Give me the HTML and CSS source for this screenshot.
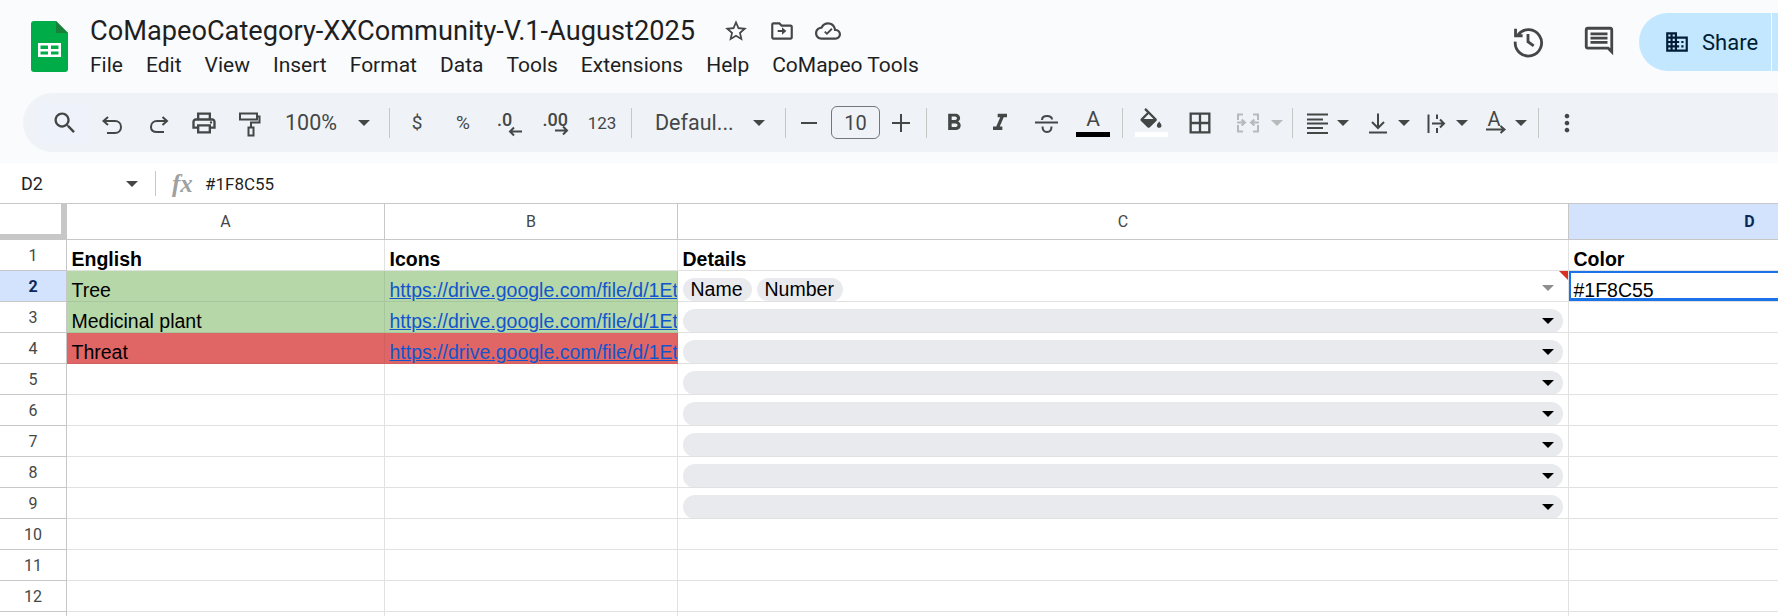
FILE: index.html

```html
<!DOCTYPE html>
<html lang="en">
<head>
  <meta charset="UTF-8" />
  <title>CoMapeoCategory-XXCommunity-V.1-August2025</title>
  <meta name="viewport" content="width=device-width, initial-scale=1" />
  <link rel="stylesheet" href="styles.css">
</head>
<body>
  <header class="top">
    <svg class="logo" viewBox="0 0 37 51">
      <path d="M3 0H25L37 12V48a3 3 0 0 1-3 3H3a3 3 0 0 1-3-3V3a3 3 0 0 1 3-3z" fill="#00ac47"/>
      <path d="M25 0L37 12H25z" fill="#188038"/>
      <path d="M7 22H30V36H7zM9.500 24.500V28H17V24.500zM20 24.500V28H27.500V24.500zM9.500 30.500V33.500H17V30.500zM20 30.500V33.500H27.500V30.500z" fill="#fff" fill-rule="evenodd"/>
    </svg>
    <div class="doc">
      <div class="title-row">
        <span class="title">CoMapeoCategory-XXCommunity-V.1-August2025</span>
        <svg class="title-ico star" viewBox="0 0 24 24"><path d="M22 9.240l-7.190-.62L12 2 9.190 8.630 2 9.240l5.460 4.730L5.820 21 12 17.270 18.180 21l-1.630-7.030L22 9.240zM12 15.400l-3.760 2.270 1-4.280-3.320-2.880 4.380-.38L12 6.100l1.710 4.040 4.380.38-3.320 2.880 1 4.280L12 15.400z"/></svg>
        <svg class="title-ico" viewBox="0 0 24 24"><path d="M20 6h-8l-2-2H4c-1.110 0-1.990.89-1.990 2L2 18c0 1.110.89 2 2 2h16c1.110 0 2-.89 2-2V8c0-1.110-.89-2-2-2zm0 12H4V6h5.170l2 2H20v10zm-8-5H8v-2h4V8.500l4 3.500-4 3.500V13z"/></svg>
        <svg class="title-ico" viewBox="0 0 24 24"><path d="M19.350 10.040C18.670 6.590 15.640 4 12 4 9.110 4 6.600 5.640 5.350 8.040 2.340 8.360 0 10.910 0 14c0 3.310 2.690 6 6 6h13c2.760 0 5-2.240 5-5 0-2.640-2.050-4.780-4.650-4.960zM19 18H6c-2.210 0-4-1.790-4-4 0-2.050 1.530-3.760 3.560-3.970l1.070-.11.5-.95C8.080 7.140 9.940 6 12 6c2.620 0 4.880 1.860 5.390 4.430l.3 1.500 1.530.11c1.560.1 2.780 1.410 2.780 2.960 0 1.650-1.350 3-3 3zm-8-2.300l-2.600-2.600 1.200-1.200 1.400 1.400 4-4 1.200 1.200z"/></svg>
      </div>
      <nav class="menu">
        <span>File</span><span>Edit</span><span>View</span><span>Insert</span><span>Format</span><span>Data</span><span>Tools</span><span>Extensions</span><span>Help</span><span>CoMapeo Tools</span>
      </nav>
    </div>
    <div class="actions">
      <svg class="act-ico" viewBox="0 0 24 24"><path class="line" d="M5 7.500A9.300 9.300 0 1 1 3 12.500M3.200 3.300V8.300H8.200M12 7V12.500L16 15.500"/></svg>
      <svg class="act-ico last" viewBox="0 0 24 24"><path d="M21.990 4c0-1.100-.89-2-1.990-2H4c-1.100 0-2 .9-2 2v12c0 1.100.9 2 2 2h14l4 4-.01-18zM20 4v13.170L18.830 16H4V4h16zM6 12h12v2H6zm0-3h12v2H6zm0-3h12v2H6z"/></svg>
      <div class="share">
        <div class="share-main">
          <svg class="share-ico" viewBox="0 0 24 24"><path d="M12 7V3H2v18h20V7H12zM6 19H4v-2h2v2zm0-4H4v-2h2v2zm0-4H4V9h2v2zm0-4H4V5h2v2zm4 12H8v-2h2v2zm0-4H8v-2h2v2zm0-4H8V9h2v2zm0-4H8V5h2v2zm10 12h-8v-2h2v-2h-2v-2h2v-2h-2V9h8v10zm-2-8h-2v2h2v-2zm0 4h-2v2h2v-2z"/></svg>
          <span>Share</span>
        </div>
        <div class="share-more"></div>
      </div>
    </div>
  </header>

  <div class="toolbar">
    <div class="btn search"><svg class="ico" viewBox="0 0 24 24"><path d="M15.500 14h-.79l-.28-.27C15.410 12.590 16 11.110 16 9.500 16 5.910 13.090 3 9.500 3S3 5.910 3 9.500 5.910 16 9.500 16c1.610 0 3.090-.59 4.230-1.570l.27.28v.79l5 4.990L20.490 19l-4.990-5zm-6 0C7.010 14 5 11.990 5 9.500S7.010 5 9.500 5 14 7.010 14 9.500 11.990 14 9.500 14z"/></svg></div>
    <div class="btn w44"><svg class="ico" viewBox="-1 -1 28 28"><path class="line" d="M7 7L2.500 11L7 15M2.500 11H14C17.500 11 20 13.500 20 17C20 20.500 17.500 23 14 23H6"/></svg></div>
    <div class="btn w45"><svg class="ico" viewBox="-2 -1 28 28"><path class="line" d="M15.500 7L20 11L15.500 15M20 11H10C6.500 11 4 13.500 4 17C4 20.500 6.500 22 10 22H17"/></svg></div>
    <div class="btn w46"><svg class="ico" viewBox="0 0 24 24"><path d="M19 8h-1V3H6v5H5c-1.660 0-3 1.340-3 3v6h4v4h12v-4h4v-6c0-1.660-1.340-3-3-3zM8 5h8v3H8V5zm8 14H8v-4h8v4zm2-4v-2H6v2H4v-4c0-.55.45-1 1-1h14c.55 0 1 .45 1 1v4h-2z"/><circle cx="18" cy="11.500" r="1"/></svg></div>
    <div class="btn w45"><svg class="ico" viewBox="-2 -2 28 28"><path class="line" d="M2 2.500H19V8.500H2zM19 5.500H21.500V11.500H13V16M10.500 16.500H15.500V24.500H10.500z"/></svg></div>
    <div class="btn zoom"><span class="tb-text">100%</span><i class="caret"></i></div>
    <i class="sep"></i>
    <div class="btn w46 sym">$</div>
    <div class="btn w46 sym">%</div>
    <div class="btn w46"><svg class="ico" viewBox="0 0 28 28"><text x="2" y="16.500" class="ico-text">.0</text><path class="line" d="M27 22.500H15M19 18.500L15 22.500L19 26.500"/></svg></div>
    <div class="btn w46"><svg class="ico" viewBox="0 0 28 28"><text x="1.500" y="16.500" class="ico-text">.00</text><path class="line" d="M14 21.500H26M22 17.500L26 21.500L22 25.500"/></svg></div>
    <div class="btn w48 num">123</div>
    <i class="sep after-num"></i>
    <div class="btn font"><span class="tb-text">Defaul...</span><i class="caret"></i></div>
    <i class="sep"></i>
    <div class="btn w37"><svg class="ico" viewBox="-2 -2 28 28"><path class="line" d="M4 12H20"/></svg></div>
    <div class="size">10</div>
    <div class="btn w42"><svg class="ico" viewBox="-2 -2 28 28"><path class="line" d="M3 12H21M12 3V21"/></svg></div>
    <i class="sep"></i>
    <div class="btn w46"><svg class="ico" viewBox="0 0 24 24"><path d="M15.600 10.790c.97-.67 1.650-1.770 1.650-2.790 0-2.260-1.750-4-4-4H7v14h7.040c2.090 0 3.710-1.700 3.710-3.790 0-1.520-.86-2.820-2.150-3.420zM10 6.500h3c.83 0 1.500.67 1.500 1.500s-.67 1.500-1.500 1.500h-3v-3zm3.500 9H10v-3h3.500c.83 0 1.500.67 1.500 1.500s-.67 1.500-1.500 1.500z"/></svg></div>
    <div class="btn w46"><svg class="ico" viewBox="0 0 24 24"><path d="M10 4v3h2.210l-3.420 8H6v3h8v-3h-2.210l3.420-8H18V4z"/></svg></div>
    <div class="btn w45"><svg class="ico" viewBox="-2 -2 28 28"><path class="line" d="M1 11.500H24M8 9C8 6 10 5 13 5C16 5 18 6 18 8.500M8.500 15.500C8.500 19 10.500 21 13 21C15.500 21 17.500 19 17.500 15.500"/></svg></div>
    <div class="btn w50 stack"><span class="letter">A</span><i class="bar black"></i></div>
    <i class="sep"></i>
    <div class="btn w48 stack"><svg class="fill-ico" viewBox="0 0 24 24"><path d="M16.560 8.940L7.620 0 6.210 1.410l2.380 2.380-5.150 5.150c-.59.59-.59 1.540 0 2.120l5.500 5.500c.29.29.68.44 1.060.44s.77-.15 1.060-.44l5.500-5.500c.59-.58.59-1.530 0-2.120zM5.210 10L10 5.210 14.790 10H5.210zM19 11.500s-2 2.170-2 3.500c0 1.100.9 2 2 2s2-.9 2-2c0-1.330-2-3.500-2-3.500z"/><path d="M4.500 9.500H15.500L10 15.500z"/></svg><i class="bar white"></i></div>
    <div class="btn w50"><svg class="ico" viewBox="0 0 24 24"><path d="M3 3v18h18V3H3zm8 16H5v-6h6v6zm0-8H5V5h6v6zm8 8h-6v-6h6v6zm0-8h-6V5h6v6z"/></svg></div>
    <div class="btn merge"><svg class="ico off" viewBox="-2 -2 28 28"><path class="line" d="M7 3.500H2V9M2 14V20.500H7M17 3.500H22V9M22 14V20.500H17M1 11.500H8M5.500 8.500L9 11.500L5.500 14.500M23 11.500H16M18.500 8.500L15 11.500L18.500 14.500"/></svg><i class="caret off"></i></div>
    <i class="sep"></i>
    <div class="btn drop w61"><svg class="ico" viewBox="-2 -2 28 28"><path class="line" d="M2 3.500H23M2 8.500H18M2 12.500H23M2 17H18M2 22H23"/></svg><i class="caret"></i></div>
    <div class="btn drop w58"><svg class="ico" viewBox="-2 -2 28 28"><path class="line" d="M12 2.500V16.500M6 11L12 17L18 11M3 21.500H21"/></svg><i class="caret"></i></div>
    <div class="btn drop w59"><svg class="ico" viewBox="-2 -2 28 28"><path class="line" d="M4.500 3.500V22M13 3.500V8M13 17V22M8 12.500H20M16 8.500L20 12.500L16 16.500"/></svg><i class="caret"></i></div>
    <div class="btn drop w59"><svg class="ico" viewBox="-2 -2 28 28"><text x="11" y="14.500" class="ico-text mid">A</text><path class="line" d="M3 18.500H21M17.500 15L21.500 18.500L17.500 22"/></svg><i class="caret"></i></div>
    <i class="sep"></i>
    <div class="btn w48"><svg class="ico" viewBox="0 0 24 24"><path d="M12 8c1.100 0 2-.9 2-2s-.9-2-2-2-2 .9-2 2 .9 2 2 2zm0 2c-1.100 0-2 .9-2 2s.9 2 2 2 2-.9 2-2-.9-2-2-2zm0 6c-1.100 0-2 .9-2 2s.9 2 2 2 2-.9 2-2-.9-2-2-2z"/></svg></div>
  </div>

  <div class="formula">
    <div class="namebox"><span>D2</span><i class="caret"></i></div>
    <i class="formula-sep"></i>
    <span class="fx">fx</span>
    <span class="formula-text">#1F8C55</span>
  </div>

  <div class="sheet">
    <div class="corner"></div><div class="col">A</div><div class="col">B</div><div class="col">C</div><div class="col active">D</div>

    <div class="rownum">1</div><div class="cell bold">English</div><div class="cell bold">Icons</div><div class="cell bold">Details</div><div class="cell bold">Color</div>

    <div class="rownum active">2</div><div class="cell green">Tree</div><div class="cell green"><a class="link">https://drive.google.com/file/d/1EtXqZ8mVn3kLw</a></div>
    <div class="cell note"><span class="chip">Name</span><span class="chip">Number</span><i class="caret gray"></i></div>
    <div class="cell selected">#1F8C55</div>

    <div class="rownum">3</div><div class="cell green">Medicinal plant</div><div class="cell green"><a class="link">https://drive.google.com/file/d/1EtXqZ8mVn3kLw</a></div><div class="cell"><div class="pill"><i class="caret dark"></i></div></div><div class="cell"></div>
    <div class="rownum">4</div><div class="cell red">Threat</div><div class="cell red"><a class="link">https://drive.google.com/file/d/1EtXqZ8mVn3kLw</a></div><div class="cell"><div class="pill"><i class="caret dark"></i></div></div><div class="cell"></div>
    <div class="rownum">5</div><div class="cell"></div><div class="cell"></div><div class="cell"><div class="pill"><i class="caret dark"></i></div></div><div class="cell"></div>
    <div class="rownum">6</div><div class="cell"></div><div class="cell"></div><div class="cell"><div class="pill"><i class="caret dark"></i></div></div><div class="cell"></div>
    <div class="rownum">7</div><div class="cell"></div><div class="cell"></div><div class="cell"><div class="pill"><i class="caret dark"></i></div></div><div class="cell"></div>
    <div class="rownum">8</div><div class="cell"></div><div class="cell"></div><div class="cell"><div class="pill"><i class="caret dark"></i></div></div><div class="cell"></div>
    <div class="rownum">9</div><div class="cell"></div><div class="cell"></div><div class="cell"><div class="pill"><i class="caret dark"></i></div></div><div class="cell"></div>
    <div class="rownum">10</div><div class="cell"></div><div class="cell"></div><div class="cell"></div><div class="cell"></div>
    <div class="rownum">11</div><div class="cell"></div><div class="cell"></div><div class="cell"></div><div class="cell"></div>
    <div class="rownum">12</div><div class="cell"></div><div class="cell"></div><div class="cell"></div><div class="cell"></div>
    <div class="rownum"></div><div class="cell"></div><div class="cell"></div><div class="cell"></div><div class="cell"></div>
  </div>
</body>
</html>
```

FILE: styles.css

```css
html, body { margin: 0; height: 616px; overflow: hidden; }
body { width: 1778px; background: #f9fbfd; font-family: Roboto, sans-serif; color: #1f1f1f; }
svg { fill: #444746; flex: none; display: block; }
.line { fill: none; stroke: #444746; stroke-width: 2; }
i { display: block; flex: none; }

/* top bar */
.top { height: 93px; display: flex; padding-left: 31px; box-sizing: border-box; }
.logo { width: 37px; height: 51px; margin-top: 21px; }
.doc { margin-left: 22px; padding-top: 13px; }
.title-row { display: flex; align-items: center; height: 36px; }
.title { font-size: 27.200px; color: #1f1f1f; white-space: nowrap; }
.title-ico { width: 26px; height: 26px; margin-left: 20px; }
.title-ico.star { margin-left: 28px; }
.menu { display: flex; gap: 23px; font-size: 21px; line-height: 24px; margin-top: 4px; color: #1f1f1f; }
.actions { margin-left: auto; display: flex; align-items: flex-start; }
.act-ico { width: 34px; height: 34px; margin-top: 24px; margin-right: 37px; }
.act-ico.last { margin-right: 17px; }
.share { display: flex; margin-top: 13px; gap: 1px; width: 139px; height: 58px; flex: none; margin-left: 6px; }
.share-main { width: 132px; background: #c2e7ff; border-radius: 29px 0 0 29px; display: flex; align-items: center; padding-left: 25px; box-sizing: border-box; font-size: 22px; color: #001d35; }
.share-ico { width: 26px; height: 26px; fill: #001d35; margin-right: 12px; }
.share-more { flex: 1; background: #c2e7ff; }

/* toolbar */
.toolbar { height: 59px; margin-left: 23px; padding-left: 14px; display: flex; align-items: center; background: #eff3f8; border-radius: 30px 0 0 30px; overflow: hidden; color: #444746; }
.btn { height: 40px; display: flex; align-items: center; justify-content: center; flex: none; box-sizing: border-box; }
.ico { width: 28px; height: 28px; }
.ico.off .line, .off .line { stroke: #b7b9bb; }
.search { width: 55px; background: #edf2fb; }
.w37 { width: 37px; } .w42 { width: 42px; } .w44 { width: 44px; } .w45 { width: 45px; } .w46 { width: 46px; }
.w48 { width: 48px; } .w50 { width: 50px; } .w58 { width: 58px; } .w59 { width: 59px; } .w61 { width: 61px; }
.tb-text { font-size: 21.500px; }
.zoom { width: 113px; justify-content: flex-start; padding-left: 13px; }
.zoom .caret { margin-left: 21px; }
.font { width: 145px; justify-content: flex-start; padding-left: 19px; }
.font .caret { margin-left: 19px; }
.sep { width: 1px; height: 30px; background: #c7c7c7; margin: 0 4px; }
.sep.after-num { margin-left: 5px; }
.caret { width: 0; height: 0; border-left: 6px solid transparent; border-right: 6px solid transparent; border-top: 6px solid #444746; }
.caret.off { border-top-color: #b7b9bb; }
.sym { font-size: 19px; }
.num { font-size: 17px; }
.ico-text { font-family: Roboto, sans-serif; font-size: 18px; font-weight: 500; fill: #444746; }
.ico-text.mid { text-anchor: middle; font-size: 20px; font-weight: 400; }
.size { width: 49px; height: 33px; margin-left: 4px; border: 1px solid #747775; border-radius: 6px; box-sizing: border-box; display: flex; align-items: center; justify-content: center; font-size: 20px; }
.stack { flex-direction: column; justify-content: flex-start; height: 50px; }
.letter { font-size: 21px; line-height: 22px; margin-top: 10px; }
.bar { height: 5px; margin-top: 2px; }
.bar.black { width: 34px; background: #000; }
.bar.white { width: 33px; background: #fff; margin-top: 0; }
.fill-ico { width: 28px; height: 28px; margin-top: 10px; margin-bottom: -4px; }
.merge { width: 63px; justify-content: flex-start; padding-left: 9px; }
.merge .caret { margin-left: 9px; }
.drop { justify-content: flex-start; padding-left: 6px; }
.drop .caret { margin-left: 6px; }

/* formula bar */
.formula { height: 41px; margin-top: 11px; background: #fff; display: flex; align-items: center; padding-left: 21px; font-size: 18px; }
.namebox { width: 134px; display: flex; align-items: center; justify-content: space-between; padding-right: 17px; box-sizing: border-box; color: #1f1f1f; }
.formula-sep { width: 1px; height: 25px; background: #c7c7c7; }
.fx { font-family: "Liberation Serif", serif; font-style: italic; font-weight: bold; font-size: 25px; color: #a0a0a0; margin-left: 16px; width: 33px; }
.formula-text { font-size: 17px; color: #1f1f1f; }

/* sheet */
.sheet { display: grid; grid-template-columns: 67px 318px 293px 891px 362px; grid-template-rows: 36px repeat(13, 31px); background: #fff; border-top: 1px solid #c7c7c7; margin-top: -1px; }
.corner { background: #fff; box-sizing: border-box; border-right: 6px solid #c7c7c7; border-bottom: 6px solid #c7c7c7; }
.col { display: flex; align-items: center; justify-content: center; font-size: 16px; color: #444746; border-right: 1px solid #c7c7c7; border-bottom: 1px solid #c7c7c7; box-sizing: border-box; }
.col.active { background: #d3e3fd; color: #0b2a5b; font-weight: 700; }
.rownum { display: flex; align-items: center; justify-content: center; font-size: 16px; color: #444746; border-right: 1px solid #c7c7c7; border-bottom: 1px solid #c7c7c7; box-sizing: border-box; }
.rownum.active { background: #d3e3fd; color: #0b2a5b; font-weight: 700; }
.cell { font-family: "Liberation Sans", Arial, sans-serif; font-size: 19.500px; line-height: 22px; color: #000; display: flex; align-items: flex-end; padding: 0 4px 0 4.500px; box-sizing: border-box; border-right: 1px solid #e1e1e1; border-bottom: 1px solid #e1e1e1; overflow: hidden; white-space: nowrap; position: relative; }
.bold { font-weight: 700; }
.green { background: #b6d7a8; border-color: rgba(0,0,0,.07); }
.red { background: #e06666; border-color: rgba(0,0,0,.06); }
.link { color: #1155cc; text-decoration: underline; }
.chip { height: 23px; line-height: 23px; padding: 0 9px 0 8px; margin-right: 5px; background: #e8eaed; border-radius: 12px; font-size: 19.500px; }
.caret.gray { margin-left: auto; margin-right: 10px; margin-bottom: 10px; border-top-color: #8e8e8e; }
.pill { flex: 1; height: 24px; margin: 0 1px -1px 0; border-radius: 12px; background: #e8eaed; display: flex; align-items: center; justify-content: flex-end; padding-right: 9px; position: relative; }
.caret.dark { border-top-color: #000; }
.note::after { content: ""; position: absolute; top: 0; right: 0; border-top: 9px solid #d93025; border-left: 9px solid transparent; }
.selected::after { content: ""; position: absolute; top: 0; left: 0; right: 0; bottom: 0; border: 2px solid #1a73e8; border-bottom-width: 3px; }
```
